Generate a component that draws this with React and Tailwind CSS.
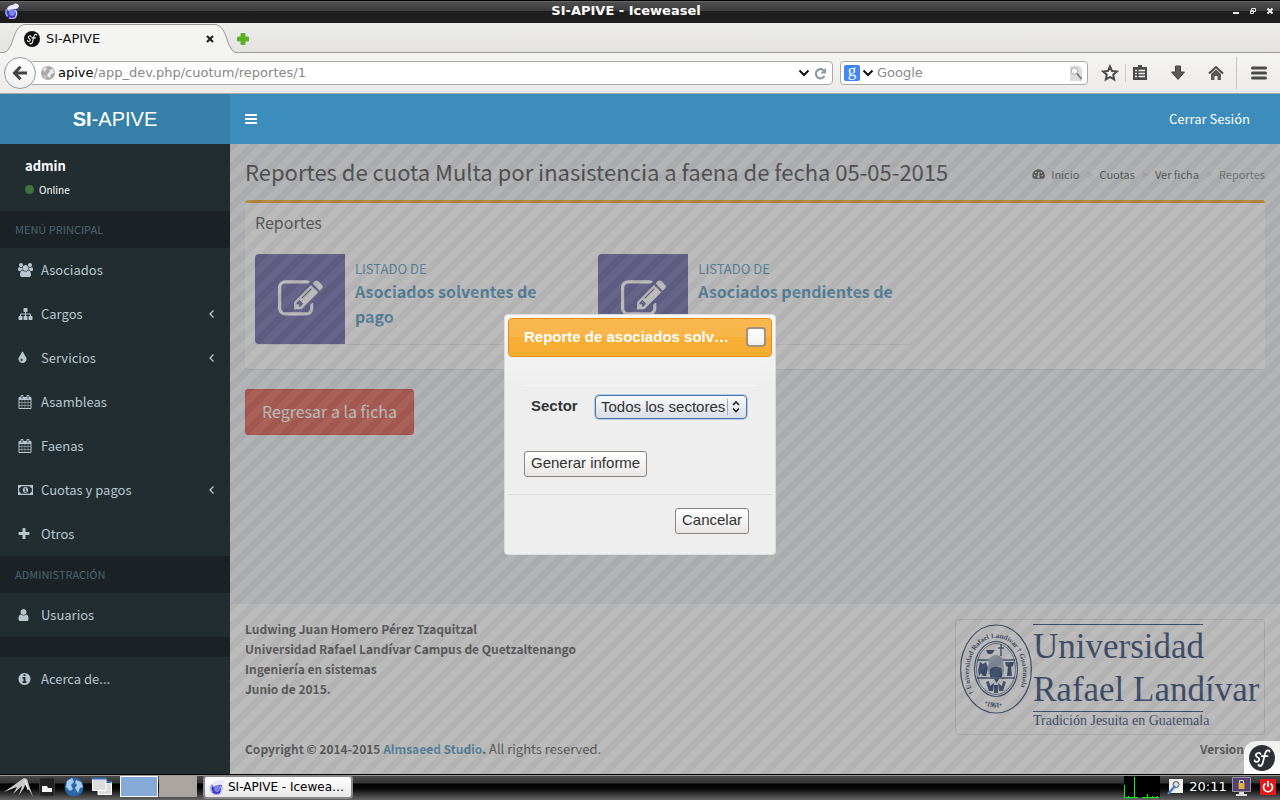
import React from "react";

const ICONS = {
  users: ["0 0 1920 1792", "M593 896q-162 5-265 128h-134q-82 0-138-40.5t-56-118.5q0-353 124-353 6 0 43.5 21t97.5 42.5 119 21.5q67 0 133-23-5 37-5 66 0 139 81 256zm1071 637q0 120-73 189.5t-194 69.5h-874q-121 0-194-69.5t-73-189.5q0-53 3.5-103.5t14-109 26.5-108.5 43-97.5 62-81 85.5-53.5 111.5-20q10 0 43 21.5t73 48 107 48 135 21.5 135-21.5 107-48 73-48 43-21.5q61 0 111.5 20t85.5 53.5 62 81 43 97.5 26.5 108.5 14 109 3.5 103.5zm-1024-1277q0 106-75 181t-181 75-181-75-75-181 75-181 181-75 181 75 75 181zm704 384q0 159-112.5 271.5t-271.5 112.5-271.5-112.5-112.5-271.5 112.5-271.5 271.5-112.5 271.5 112.5 112.5 271.5zm576 225q0 78-56 118.5t-138 40.5h-134q-103-123-265-128 81-117 81-256 0-29-5-66 66 23 133 23 59 0 119-21.5t97.5-42.5 43.5-21q124 0 124 353zm-128-609q0 106-75 181t-181 75-181-75-75-181 75-181 181-75 181 75 75 181z"],
  sitemap: ["0 0 1792 1792", "M1792 1248v320q0 40-28 68t-68 28h-320q-40 0-68-28t-28-68v-320q0-40 28-68t68-28h96v-192h-512v192h96q40 0 68 28t28 68v320q0 40-28 68t-68 28h-320q-40 0-68-28t-28-68v-320q0-40 28-68t68-28h96v-192h-512v192h96q40 0 68 28t28 68v320q0 40-28 68t-68 28h-320q-40 0-68-28t-28-68v-320q0-40 28-68t68-28h96v-192q0-52 38-90t90-38h512v-192h-96q-40 0-68-28t-28-68v-320q0-40 28-68t68-28h320q40 0 68 28t28 68v320q0 40-28 68t-68 28h-96v192h512q52 0 90 38t38 90v192h96q40 0 68 28t28 68z"],
  tint: ["384 0 1792 1792", "M896 1152q0-36-20-69-1-1-15.5-22.5t-25.5-38-25-44-21-50.5q-4-16-21-16t-21 16q-7 23-21 50.5t-25 44-25.5 38-15.5 22.5q-20 33-20 69 0 53 37.5 90.5t90.5 37.5 90.5-37.5 37.5-90.5zm512-128q0 212-150 362t-362 150-362-150-150-362q0-145 81-275 6-9 62.5-90.5t101-151 99.5-178 83-201.5q9-30 34-47t51-17 51.5 17 33.5 47q28 93 83 201.5t99.5 178 101 151 62.5 90.5q81 127 81 275z"],
  calendar: ["64 0 1792 1792", "M192 1664h288v-288h-288v288zm352 0h320v-288h-320v288zm-352-352h288v-320h-288v320zm352 0h320v-320h-320v320zm-352-384h288v-288h-288v288zm736 736h320v-288h-320v288zm-384-736h320v-288h-320v288zm768 736h288v-288h-288v288zm-384-352h320v-320h-320v320zm-352-864v-288q0-13-9.5-22.5t-22.5-9.5h-64q-13 0-22.5 9.5t-9.5 22.5v288q0 13 9.5 22.5t22.5 9.5h64q13 0 22.5-9.5t9.5-22.5zm736 864h288v-320h-288v320zm-384-384h320v-288h-320v288zm384 0h288v-288h-288v288zm32-480v-288q0-13-9.5-22.5t-22.5-9.5h-64q-13 0-22.5 9.5t-9.5 22.5v288q0 13 9.5 22.5t22.5 9.5h64q13 0 22.5-9.5t9.5-22.5zm384-64v1280q0 52-38 90t-90 38h-1408q-52 0-90-38t-38-90v-1280q0-52 38-90t90-38h128v-96q0-66 47-113t113-47h64q66 0 113 47t47 113v96h384v-96q0-66 47-113t113-47h64q66 0 113 47t47 113v96h128q52 0 90 38t38 90z"],
  plus: ["192 0 1792 1792", "M1600 736v192q0 40-28 68t-68 28h-416v416q0 40-28 68t-68 28h-192q-40 0-68-28t-28-68v-416h-416q-40 0-68-28t-28-68v-192q0-40 28-68t68-28h416v-416q0-40 28-68t68-28h192q40 0 68 28t28 68v416h416q40 0 68 28t28 68z"],
  user: ["256 0 1792 1792", "M1536 1399q0 109-62.5 187t-150.5 78h-854q-88 0-150.5-78t-62.5-187q0-85 8.5-160.5t31.5-152 58.5-131 94-89 134.5-34.5q131 128 313 128t313-128q76 0 134.5 34.5t94 89 58.5 131 31.5 152 8.5 160.5zm-256-887q0 159-112.5 271.5t-271.5 112.5-271.5-112.5-112.5-271.5 112.5-271.5 271.5-112.5 271.5 112.5 112.5 271.5z"],
  info: ["128 0 1792 1792", "M1152 1376v-160q0-14-9-23t-23-9h-96v-512q0-14-9-23t-23-9h-320q-14 0-23 9t-9 23v160q0 14 9 23t23 9h96v320h-96q-14 0-23 9t-9 23v160q0 14 9 23t23 9h448q14 0 23-9t9-23zm-128-896v-160q0-14-9-23t-23-9h-192q-14 0-23 9t-9 23v160q0 14 9 23t23 9h192q14 0 23-9t9-23zm640 416q0 209-103 385.5t-279.5 279.5-385.5 103-385.5-103-279.5-279.5-103-385.5 103-385.5 279.5-279.5 385.5-103 385.5 103 279.5 279.5 103 385.5z"],
  edit: ["0 0 1792 1792", "M888 1184l116-116-152-152-116 116v56h96v96h56zm440-720q-16-16-33 1l-350 350q-17 17-1 33t33-1l350-350q17-17 1-33zm80 594v190q0 119-84.5 203.5t-203.5 84.5h-832q-119 0-203.5-84.5t-84.5-203.5v-832q0-119 84.5-203.5t203.5-84.5h832q63 0 117 25 15 7 18 23 3 17-9 29l-49 49q-14 14-32 8-23-6-45-6h-832q-66 0-113 47t-47 113v832q0 66 47 113t113 47h832q66 0 113-47t47-113v-126q0-13 9-22l64-64q15-15 35-7t20 29zm-96-738l288 288-672 672h-288v-288zm444 132l-92 92-288-288 92-92q28-28 68-28t68 28l152 152q28 28 28 68t-28 68z"],
};

function Icon({ name, className }) {
  if (name === "money") {
    return (
      <svg viewBox="0 0 15 14" className={className} fill="none" aria-hidden="true">
        <path fill="currentColor" fillRule="evenodd" d="M0 2h15v10H0zM3 3.2A2 2 0 0 1 1.2 5v4A2 2 0 0 1 3 10.800h9A2 2 0 0 1 13.800 9V5A2 2 0 0 1 12 3.200z" />
        <ellipse cx="7.500" cy="7" rx="2.600" ry="3" fill="currentColor" />
        <path d="M6.600 5.900l1-.7v3.200M6.500 8.600h2.200" stroke="#222d32" strokeWidth=".9" />
      </svg>
    );
  }
  const [box, d] = ICONS[name];
  return (
    <svg viewBox={box} className={className} fill="currentColor" aria-hidden="true">
      <path d={d} />
    </svg>
  );
}

function IceweaselLogo({ className }) {
  return (
    <svg viewBox="0 0 16 16" className={className} aria-hidden="true">
      <circle cx="7.500" cy="9.500" r="6" fill="#3a36c0" />
      <path d="M2.500 6.500Q1 10 3.500 13.500M5 15q4 1.500 7-1" stroke="#a9a8ee" strokeWidth="1.400" fill="none" />
      <ellipse cx="8" cy="9.500" rx="3" ry="3.400" fill="#7f83e6" />
      <path d="M3 5.500Q5 1.500 9 2q1-2 3-1.500 3 .5 3 3-1 2.500-4 2.500Q7 5.500 4 8z" fill="#e6ebfb" />
      <path d="M11 7q3 3 .5 7" stroke="#d5d8fa" strokeWidth="1.400" fill="none" />
    </svg>
  );
}

function SfLogo({ className, color }) {
  return (
    <svg viewBox="0 0 26 26" className={className} aria-hidden="true">
      <circle cx="13" cy="13" r="13" fill={color} />
      <path d="M11.500 9.200q-.3-1.600-2.400-1.200-2.300.5-2.200 2.300.1 1.300 1.900 2.200 1.900 1 1.300 2.700-.7 1.900-2.900 1.700-1.700-.2-1.500-1.500" stroke="#fff" strokeWidth="1.700" fill="none" strokeLinecap="round" />
      <path d="M20.500 6.600q-.2-1.600-1.800-1.300-2 .4-3 4.700l-1.800 7.500q-1 3.800-3.300 3.500-1.300-.3-.9-1.500M12.800 11.200h5.700" stroke="#fff" strokeWidth="1.700" fill="none" strokeLinecap="round" />
    </svg>
  );
}

function WindowTitle() {
  return (
    <div className="flex h-[23px] shrink-0 items-center border-t border-black bg-[linear-gradient(#666_0_1px,#505050_1px,#3a3a3a_10px,#202020_10px,#1c1c1c)] px-1 pb-[2px]">
      <IceweaselLogo className="size-4" />
      <h1 className="flex-1 text-center font-['DejaVu_Sans',sans-serif] text-[13px] leading-5 font-bold text-white">SI-APIVE - Iceweasel</h1>
      <div className="flex items-center gap-[9px] pr-[2px]">
        <button aria-label="Minimizar"><svg className="block size-2" viewBox="0 0 8 8"><path d="M1 5h6v2H1z" fill="#e8e8e8" /></svg></button>
        <button aria-label="Restaurar"><svg className="block size-2" viewBox="0 0 8 8"><path d="M2.500 1.500h4v3h-4zM1.500 3.500h3v3h-3z" stroke="#e8e8e8" fill="none" /></svg></button>
        <button aria-label="Cerrar"><svg className="block size-2" viewBox="0 0 8 8"><path d="M1.500 1.500l5 5m0-5l-5 5" stroke="#eee" strokeWidth="2" /></svg></button>
      </div>
    </div>
  );
}

function TabStrip() {
  return (
    <div className="flex h-[30px] shrink-0 items-stretch border-b border-[#999] bg-gradient-to-b from-[#ececeb] to-[#e4e3e2] font-['DejaVu_Sans',sans-serif] text-[13px] text-[#111]">
      <div className="relative flex h-8 w-[234px] items-center pr-5 pl-6">
        <svg className="absolute top-0 left-0 h-[30px] w-[240px]" viewBox="0 0 240 30" fill="none" aria-hidden="true">
          <path d="M0 29.500h4c10 0 8-27.500 22-28h188c14 .5 12 28 22 28h4V30H0z" fill="#f4f4f3" />
          <path d="M0 29.500h3c11 0 9-27.500 22-28h190c13 .5 11 28 22 28h3" stroke="#999" />
        </svg>
        <SfLogo className="relative size-4" color="#111" />
        <span className="relative ml-[6px] flex-1">SI-APIVE</span>
        <button aria-label="Cerrar pestaña" className="relative">
          <svg className="block size-2" viewBox="0 0 8 8"><path d="M1 1l6 6m0-6L1 7" stroke="#222" strokeWidth="2.200" /></svg>
        </button>
      </div>
      <button aria-label="Nueva pestaña" className="ml-[3px] pt-[2px]">
        <svg className="block size-3" viewBox="0 0 12 12"><path d="M4 .5h4V4h3.500v4H8v3.500H4V8H.5V4H4z" fill="#55b510" stroke="#6fa84a" /></svg>
      </button>
    </div>
  );
}

function Toolbar() {
  return (
    <div className="flex h-[41px] shrink-0 items-center border-b border-[#aaa] bg-gradient-to-b from-[#f4f4f3] to-[#edebea] pr-[13px] pl-1 font-['DejaVu_Sans',sans-serif] text-[13px]">
      <button aria-label="Atrás" className="z-10 flex size-8 items-center justify-center rounded-full border border-[#8d9cad] bg-gradient-to-b from-white to-[#f0f0f0]">
        <svg className="size-4" viewBox="0 0 16 16" fill="none" stroke="#444" strokeWidth="3"><path d="M15 8H3M8.500 1.800L2.500 8l6 6.200" /></svg>
      </button>
      <div className="-ml-[7px] flex h-6 flex-1 items-center rounded-sm border border-[#aaa] bg-white pr-[5px] pl-[11px]">
        <svg className="size-[14px] shrink-0" viewBox="0 0 14 14"><circle cx="7" cy="7" r="7" fill="#a9a9a9" /><path d="M2 3l4-2-1 3-2 2zM8 4l4-1 1 4-3 1-1 4-3-2 1-3 2-1zM2 8l3 3v2z" fill="#eee" /></svg>
        <div className="ml-[3px] flex-1 whitespace-nowrap text-[#888]"><span className="text-black">apive</span>/app_dev.php/cuotum/reportes/1</div>
        <button aria-label="Historial"><svg className="block h-[10px] w-3" viewBox="0 0 12 10" fill="none" stroke="#111" strokeWidth="2"><path d="M1.500 2.500L6 7l4.500-4.500" /></svg></button>
        <button aria-label="Recargar" className="ml-1"><svg className="block size-[13px]" viewBox="0 0 13 13" fill="none"><path d="M9.500 3.300A4.600 4.600 0 1 0 10.500 9" stroke="#8b9aa7" strokeWidth="2.200" /><path d="M12 .8v5.700H6.300z" fill="#8b9aa7" /></svg></button>
      </div>
      <div className="ml-[7px] flex h-6 w-[248px] items-center rounded-sm border border-[#aaa] bg-white px-[3px]">
        <span className="flex size-4 items-center justify-center rounded-[2px] bg-[#4285f4] pb-1 font-['Liberation_Serif',serif] text-[17px] leading-4 text-white">g</span>
        <svg className="ml-[2px] h-[10px] w-3" viewBox="0 0 12 10" fill="none" stroke="#111" strokeWidth="2"><path d="M1.500 2.500L6 7l4.500-4.500" /></svg>
        <input aria-label="Buscar" placeholder="Google" className="ml-[3px] min-w-0 flex-1 outline-none placeholder:text-[#8a8a8a]" />
        <button aria-label="Ir a la búsqueda"><svg className="block size-4" viewBox="0 0 16 16"><path d="M2 1h9l3 3v12H2z" fill="#dcdcdc" /><circle cx="6.500" cy="6" r="3.300" fill="#f5f5f5" stroke="#aaa" /><path d="M9 8.500l4.500 5.500" stroke="#777" strokeWidth="1.800" /></svg></button>
      </div>
      <button aria-label="Marcador" className="ml-[13px]"><svg className="block size-[18px]" viewBox="0 0 18 18"><path d="M9 2.500l2 4.500 4.800.5-3.600 3.200 1 4.800L9 13l-4.200 2.500 1-4.800L2.200 7.500 7 7z" fill="#fafafa" stroke="#4a4a4a" strokeWidth="2" /></svg></button>
      <span className="mx-[6px] h-[18px] w-px bg-[#ccc]" />
      <button aria-label="Lista"><svg className="block size-4" viewBox="0 0 16 16"><path d="M6 0h4v2h5v13H1V2h5z" fill="#4a4a4a" /><path d="M3 5.500h2M6.500 5.500H13M3 8.500h2M6.500 8.500H13M3 11.500h2M6.500 11.500H13" stroke="#f3f3f3" strokeWidth="1.600" /></svg></button>
      <button aria-label="Descargas" className="ml-[22px]"><svg className="block size-4" viewBox="0 0 16 16"><path d="M5.500 1h5v6h4L8 14.500 1.500 7h4z" fill="#5a5a5a" stroke="#444" /></svg></button>
      <button aria-label="Inicio" className="ml-[22px]"><svg className="block size-4" viewBox="0 0 16 16"><path d="M3 9l5-4.500L13 9v6H9.500v-4h-3v4H3z" fill="#5a5a5a" /><path d="M1 8.500l7-6.500 7 6.500" stroke="#4a4a4a" strokeWidth="2" fill="none" /></svg></button>
      <span className="mr-[14px] ml-3 h-8 w-px bg-[#c4c4c4]" />
      <button aria-label="Menú"><svg className="block size-4" viewBox="0 0 16 16" fill="none" stroke="#4a4a4a" strokeWidth="3" strokeLinecap="round"><path d="M1.500 3h13M1.500 8h13M1.500 13h13" /></svg></button>
    </div>
  );
}

function MenuItem({ icon, label, expandable }) {
  return (
    <li>
      <a href="#" className="flex h-11 items-center pr-4 pl-[18px] text-[#b8c7ce]">
        <Icon name={icon} className="h-[14px] w-[15px]" />
        <span className="ml-2 flex-1">{label}</span>
        {expandable && <svg viewBox="0 0 5 8" className="h-2 w-[5px]" fill="none" stroke="currentColor" strokeWidth="1.300" aria-hidden="true"><path d="M4.500 .5L1 4l3.500 3.500" /></svg>}
      </a>
    </li>
  );
}

function MenuHeader({ children }) {
  return <li className="flex h-[37px] items-center bg-[#1a2226] pl-[15px] text-[11px] text-[#4b646f]">{children}</li>;
}

function Sidebar() {
  return (
    <aside className="z-20 flex w-[230px] shrink-0 flex-col bg-[#222d32]">
      <a href="#" className="flex h-[50px] items-center justify-center bg-[#367fa9] font-['Liberation_Sans',sans-serif] text-[20px] text-white"><b>SI</b>-APIVE</a>
      <div className="flex h-[67px] flex-col justify-center gap-1 pl-[25px] text-white">
        <p className="text-[13px] leading-5 font-bold">admin</p>
        <p className="flex items-center gap-[5px] text-[10px] leading-5"><span className="size-[9px] rounded-full bg-[#3c763d]" />Online</p>
      </div>
      <ul>
        <MenuHeader>MENÚ PRINCIPAL</MenuHeader>
        <MenuItem icon="users" label="Asociados" />
        <MenuItem icon="sitemap" label="Cargos" expandable />
        <MenuItem icon="tint" label="Servicios" expandable />
        <MenuItem icon="calendar" label="Asambleas" />
        <MenuItem icon="calendar" label="Faenas" />
        <MenuItem icon="money" label="Cuotas y pagos" expandable />
        <MenuItem icon="plus" label="Otros" />
        <MenuHeader>ADMINISTRACIÓN</MenuHeader>
        <MenuItem icon="user" label="Usuarios" />
        <li className="h-5 bg-[#1a2226]" />
        <MenuItem icon="info" label="Acerca de..." />
      </ul>
    </aside>
  );
}

function InfoBox({ children }) {
  return (
    <a href="#" className="flex min-h-[90px] rounded-sm bg-white text-[#3c8dbc] shadow-[0_1px_1px_rgba(0,0,0,0.1)]">
      <span className="flex w-[90px] shrink-0 items-center justify-center rounded-l-sm bg-[#555299] text-white">
        <Icon name="edit" className="size-[45px]" />
      </span>
      <span className="block px-[10px] py-[5px]">
        <span className="block text-[13px] leading-5">LISTADO DE</span>
        <span className="block text-base leading-[25px] font-bold">{children}</span>
      </span>
    </a>
  );
}

function Crumbs() {
  return (
    <nav className="flex items-center pt-[6px] text-[11px] text-[#444]">
      <svg viewBox="0 0 14 12" className="mr-[6px] h-3 w-[13px]" aria-hidden="true">
        <path d="M7 1a6.500 6.500 0 0 0-6 9.500q.3.500.8.500h10.400q.5 0 .8-.5A6.500 6.500 0 0 0 7 1z" fill="#444" />
        <path d="M7.500 4L7 9" stroke="#fff" strokeWidth="1.200" /><circle cx="7" cy="9" r="1.300" fill="#fff" />
        <circle cx="3" cy="7.500" r=".8" fill="#fff" /><circle cx="4.200" cy="4.500" r=".8" fill="#fff" /><circle cx="10" cy="4.500" r=".8" fill="#fff" /><circle cx="11" cy="7.500" r=".8" fill="#fff" />
      </svg>
      <a href="#">Inicio</a><span className="px-[7px] text-[#ccc]">&gt;</span>
      <a href="#">Cuotas</a><span className="px-[7px] text-[#ccc]">&gt;</span>
      <a href="#">Ver ficha</a><span className="px-[7px] text-[#ccc]">&gt;</span>
      <span className="text-[#777]">Reportes</span>
    </nav>
  );
}

function Seal() {
  return (
    <svg viewBox="0 0 72 90" className="h-[90px] w-[72px] shrink-0" fill="none" aria-hidden="true">
      <defs>
        <path id="sealArc" d="M14 69A27 35 0 1 1 58 69" />
        <path id="sealYear" d="M24 80Q36 87 48 80" />
      </defs>
      <g stroke="#0e2c63">
        <ellipse cx="36" cy="45" rx="35.400" ry="44" strokeWidth="1.200" />
        <ellipse cx="36" cy="45" rx="21.500" ry="27.500" strokeWidth="1.200" />
        <ellipse cx="36" cy="45" rx="19.500" ry="25.500" strokeWidth=".7" />
        <path d="M17 36h12M43 36h12M17 54h38M41 20v12M38 24h6" strokeWidth="1.400" />
      </g>
      <g fill="#0e2c63">
        <path d="M26 26h9l-3 4h-4z" /><path d="M20 38l3 2 3-2 2 6-2 8h-3l-2-3-2 3-1-6z" /><path d="M45 38h9l-1 4-2 1 1 9h-5l1-9-2-1z" />
        <path d="M29 35q7-8 14 0l1 11q-1 9-8 9t-8-9z" fillOpacity=".45" /><path d="M30 45q6-5 12 0v8H30zM34 55h5l-2.500 4z" />
        <path d="M26 58l3-1 1 5 4-3-1 8h-4zM46 58l-3-1-1 5-4-3 1 8h4zM34 61h4v8h-4z" />
      </g>
      <g fill="#0e2c63" fontFamily="Liberation Serif, serif" fontWeight="700">
        <text fontSize="7"><textPath href="#sealArc">† Universidad Rafael Landívar † Guatemala</textPath></text>
        <text fontSize="7"><textPath href="#sealYear">•1961•</textPath></text>
      </g>
    </svg>
  );
}

function Footer() {
  return (
    <footer className="bg-white px-[15px] py-[15px] leading-5">
      <div className="flex h-[120px] items-start justify-between font-bold">
        <p className="text-xs leading-5">Ludwing Juan Homero Pérez Tzaquitzal<br />Universidad Rafael Landívar Campus de Quetzaltenango<br />Ingeniería en sistemas<br />Junio de 2015.</p>
        <div className="flex h-[116px] w-[310px] gap-px rounded border border-[#ddd] p-1 font-['Liberation_Serif',serif] font-normal whitespace-nowrap text-[#0e2c63]">
          <Seal />
          <div className="flex flex-col items-start">
            <div className="h-px w-[170px] shrink-0 bg-[#0e2c63]" />
            <p className="text-[35px] leading-[43px]">Universidad</p>
            <p className="text-[35px] leading-[43px]">Rafael Landívar</p>
            <div className="h-px w-[170px] shrink-0 bg-[#0e2c63]" />
            <p className="text-[14px] leading-[18px]">Tradición Jesuita en Guatemala</p>
          </div>
        </div>
      </div>
      <div className="flex justify-between">
        <p><b className="text-xs leading-5">Copyright © 2014-2015 <a href="#" className="text-[#3c8dbc]">Almsaeed Studio</a>.</b> All rights reserved.</p>
        <p><b className="text-xs leading-5">Version</b> 2.0</p>
      </div>
    </footer>
  );
}

function Dialog() {
  return (
    <div role="dialog" aria-labelledby="dialog-title" className="w-[272px] rounded border border-[#ddd] bg-[#eee] bg-[linear-gradient(#f8f8f8,#eee_70px)] p-[3px] font-['Liberation_Sans',sans-serif] text-[15px] text-[#333]">
      <div className="flex h-[39px] items-center rounded border border-[#e78f08] bg-[linear-gradient(#f9b750,#f8b64a_50%,#f6ae35_50%,#f6ae30)] pr-[5px] pl-[15px]">
        <h2 id="dialog-title" className="flex-1 text-[15px] leading-6 font-bold whitespace-nowrap text-white">Reporte de asociados solv…</h2>
        <button aria-label="Cerrar" className="size-5 rounded-[4px] border-2 border-[#a09080] bg-gradient-to-b from-white to-[#f0efee]" />
      </div>
      <div className="px-4 pt-7 pb-[17px]">
        <div className="flex items-center justify-between border-t border-[#f6f6f6] pt-[9px] pr-[9px] pl-[7px]">
          <label htmlFor="sector" className="font-bold">Sector</label>
          <div className="relative">
            <select id="sector" className="block h-6 w-[152px] appearance-none rounded border border-[#4a74a8] bg-gradient-to-b from-[#f8fafd] to-[#d9dde4] pl-[5px] text-[15px] shadow-[0_0_0_1px_#b4cbe6] outline-none">
              <option>Todos los sectores</option>
            </select>
            <svg className="pointer-events-none absolute top-1 right-1 h-4 w-4" viewBox="0 0 16 16" fill="none" aria-hidden="true"><path d="M.5 0v16" stroke="#aaa" /><path d="M6 6l3-3 3 3M6 9.500l3 3 3-3" stroke="#222" strokeWidth="1.600" /></svg>
          </div>
        </div>
        <button className="mt-8 h-[26px] rounded-[3px] border border-[#8a8580] bg-gradient-to-b from-white to-[#e8e7e5] px-[6px]">Generar informe</button>
      </div>
      <div className="flex justify-end border-t border-[#ddd] pt-[13px] pr-[23px] pb-[17px]">
        <button className="h-[26px] rounded-[3px] border border-[#8a8580] bg-gradient-to-b from-white to-[#e8e7e5] px-[6px]">Cancelar</button>
      </div>
    </div>
  );
}

function Taskbar() {
  return (
    <div className="flex h-[26px] shrink-0 items-center border-t border-black bg-[linear-gradient(#999_0_1px,#4a4a4a_1px,#333_8px,#000_9px,#0a0a0a_14px,#666)] px-1 pb-[2px] font-['DejaVu_Sans',sans-serif] text-[13px]">
      <button aria-label="Menú de aplicaciones"><svg className="block h-5 w-[29px]" viewBox="0 0 29 20"><path d="M0 15L20 1l3 1 6 18q-4-8-8-12l-1 3-5 7 3-9L9 17l4-7z" fill="#c8c8c8" /><path d="M21 3l3 10" stroke="#fff" strokeWidth="1" /></svg></button>
      <button aria-label="Archivos" className="ml-[6px]"><svg className="block h-5 w-4" viewBox="0 0 16 20"><rect x=".5" y="1" width="15" height="18" rx="2" fill="#222" stroke="#3c3c3c" /><path d="M3 15V9h5l1 2h4v4z" fill="#f2f2f2" /></svg></button>
      <button aria-label="Navegador" className="ml-[9px]"><svg className="block size-5" viewBox="0 0 20 20"><circle cx="10" cy="10" r="9.500" fill="#2a66a8" /><path d="M3 4l5-3 2 4-3 3 2 4-3 2-4-4zM12 3l5 2 2 5-3 1-2 5-3-5 2-3-2-2z" fill="#a9cdea" /></svg></button>
      <button aria-label="Escritorio" className="ml-2"><svg className="block size-5" viewBox="0 0 20 20"><path d="M6 5h13.500v12.500H6z" fill="#ddd" stroke="#fff" /><path d="M5.500 5h14" stroke="#3868b8" strokeWidth="2" /><path d="M.5 2h13.500v11.500H.5z" fill="#dcdcdc" stroke="#fff" /><path d="M0 1.500h14.500" stroke="#3868b8" strokeWidth="2" /></svg></button>
      <button aria-label="Escritorio 1" className="ml-2 h-[21px] w-[38px] border border-white bg-[#86aad8]" />
      <button aria-label="Escritorio 2" className="ml-px h-[21px] w-[38px] bg-[#aaa5a0]" />
      <button className="ml-[6px] flex h-6 w-[150px] items-center gap-[3px] rounded border-2 border-[#888] bg-gradient-to-b from-white to-[#e8e8e8] pl-1 text-black">
        <IceweaselLogo className="size-4 shrink-0" />
        <span className="text-xs whitespace-nowrap">SI-APIVE - Icewea…</span>
      </button>
      <div className="ml-auto flex items-center">
        <svg className="h-[22px] w-9" viewBox="0 0 36 22" aria-hidden="true"><path fill="#000" d="M0 0h36v22H0z" /><path fill="#0f0" d="M0 9h1v13H0zM10 1h1v21h-1zM23 18h1v4h-1zM4 20h1v2H4zM28 20h1v2h-1zM33 20h1v2h-1zM0 21h14v1H0zM18 21h17v1H18z" /></svg>
        <svg className="ml-[7px] size-4" viewBox="0 0 16 16" aria-hidden="true"><path d="M2 0h14v14H2z" fill="#eee" /><circle cx="9" cy="5.500" r="3" fill="#ddd" stroke="#555" /><path d="M8 7l-7 8" stroke="#4080c8" strokeWidth="2.500" /></svg>
        <span className="ml-[6px] w-[38px] text-center text-white">20:11</span>
        <svg className="ml-[5px] h-5 w-[19px]" viewBox="0 0 19 20" aria-hidden="true"><path d="M.5.500h18v14H.5z" fill="#54416e" stroke="#9a93a6" /><path d="M7 15h5v2h3v2H4v-2h3z" fill="#ddd" /><path d="M6.500 6h6v6h-6z" fill="#e0b040" /><path d="M7.500 6V3.500h4V6" stroke="#ddd" fill="none" /></svg>
        <button aria-label="Apagar" className="ml-[9px]"><svg className="block size-4" viewBox="0 0 16 16"><rect width="16" height="16" rx="1" fill="#e01a1a" /><path d="M5.500 4.500a4.500 4.500 0 1 0 5 0M8 2v6" stroke="#fff" strokeWidth="1.700" fill="none" /></svg></button>
      </div>
    </div>
  );
}

export default function App() {
  return (
    <div className="flex min-h-screen flex-col">
      <WindowTitle />
      <TabStrip />
      <Toolbar />
      <div className="relative flex flex-1 font-['Noto_Sans_CJK_SC','Noto_Sans',sans-serif] text-[13px]">
        <Sidebar />
        <div className="flex min-w-0 flex-1 flex-col">
          <header className="flex h-[50px] items-center justify-between bg-[#3c8dbc] pr-[30px] pl-[15px] text-white">
            <button aria-label="Alternar menú"><svg className="block h-[10px] w-3" viewBox="0 0 12 10"><path d="M0 0h12v2H0zM0 4h12v2H0zM0 8h12v2H0z" fill="#fff" /></svg></button>
            <a href="#">Cerrar Sesión</a>
          </header>
          <div className="relative flex flex-1 flex-col bg-[#ecf0f5] text-[#444]">
            <main className="flex-1 px-[15px]">
              <div className="flex h-14 items-center justify-between pb-[2px] text-[#333]">
                <h2 className="text-[22px] leading-6">Reportes de cuota Multa por inasistencia a faena de fecha 05-05-2015</h2>
                <Crumbs />
              </div>
              <section className="rounded-[3px] border-t-[3px] border-[#f39c12] bg-white px-[10px] pb-[25px] shadow-[0_1px_1px_rgba(0,0,0,0.1)]">
                <h3 className="flex h-[51px] items-start pt-[9px] text-base leading-5">Reportes</h3>
                <div className="grid grid-cols-3 gap-[30px]">
                  <InfoBox>Asociados solventes de pago</InfoBox>
                  <InfoBox>Asociados pendientes de pago</InfoBox>
                </div>
              </section>
              <a href="#" className="mt-5 inline-flex h-[46px] items-center rounded-[3px] border border-[#d73925] bg-[#dd4b39] px-4 pb-[2px] text-base text-white">Regresar a la ficha</a>
            </main>
            <Footer />
            <div className="pointer-events-none absolute inset-0 bg-[linear-gradient(135deg,#666_25%,#777_25%_50%,#666_50%_75%,#777_75%)] bg-[length:20px_20px] opacity-50" />
            <button aria-label="Symfony" className="absolute right-0 bottom-0 z-30 flex h-[33px] w-9 items-center justify-center rounded-tl-xl bg-gradient-to-b from-[#eee] to-white">
              <SfLogo className="size-[26px]" color="#2f2f38" />
            </button>
          </div>
        </div>
        <div className="pointer-events-none absolute inset-0 z-30 flex items-center justify-center">
          <div className="pointer-events-auto"><Dialog /></div>
        </div>
      </div>
      <Taskbar />
    </div>
  );
}
